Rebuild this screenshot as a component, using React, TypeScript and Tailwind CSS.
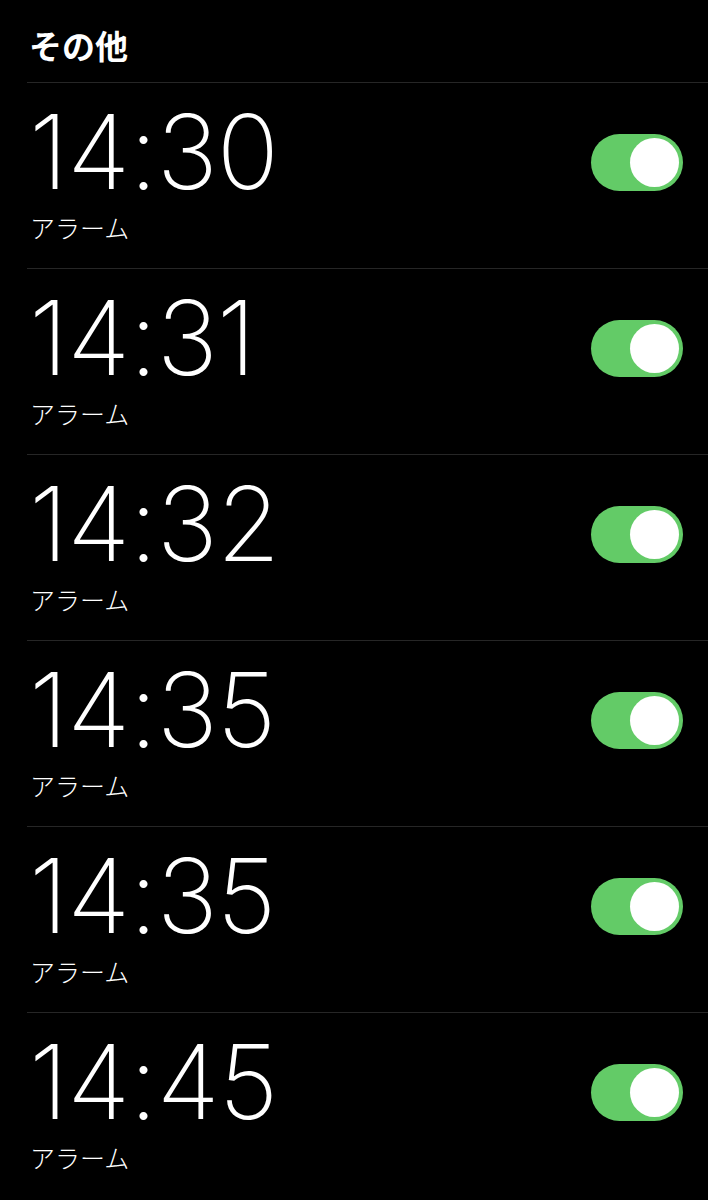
const alarms = ['14:30', '14:31', '14:32', '14:35', '14:35', '14:45'];

function Toggle() {
  return (
    <div className="mt-[51px] flex h-[57px] w-[92px] items-center justify-end rounded-full bg-[#63cb67] px-[4px]">
      <div className="h-[49px] w-[49px] rounded-full bg-white" />
    </div>
  );
}

export default function App() {
  return (
    <div
      className="min-h-[1200px] w-[708px] bg-black text-white"
      style={{ fontFamily: 'Inter, "Noto Sans CJK JP", sans-serif' }}
    >
      <div className="pl-[29px] pt-[29px] pb-[17px] text-[33px] font-bold leading-[36px]">その他</div>
      <div className="ml-[27px]">
        {alarms.map((t, i) => (
          <div key={i} className="flex h-[186px] items-start border-t border-[#262626] pr-[25px]">
            <div className="flex-1 pl-[2px] pt-[17px]">
              <div className="text-[103px] font-extralight leading-[103px] tracking-[-1px]">{t}</div>
              <div className="mt-[11px] pl-[1px] text-[25px] font-light leading-[30px]">アラーム</div>
            </div>
            <Toggle />
          </div>
        ))}
      </div>
    </div>
  );
}
